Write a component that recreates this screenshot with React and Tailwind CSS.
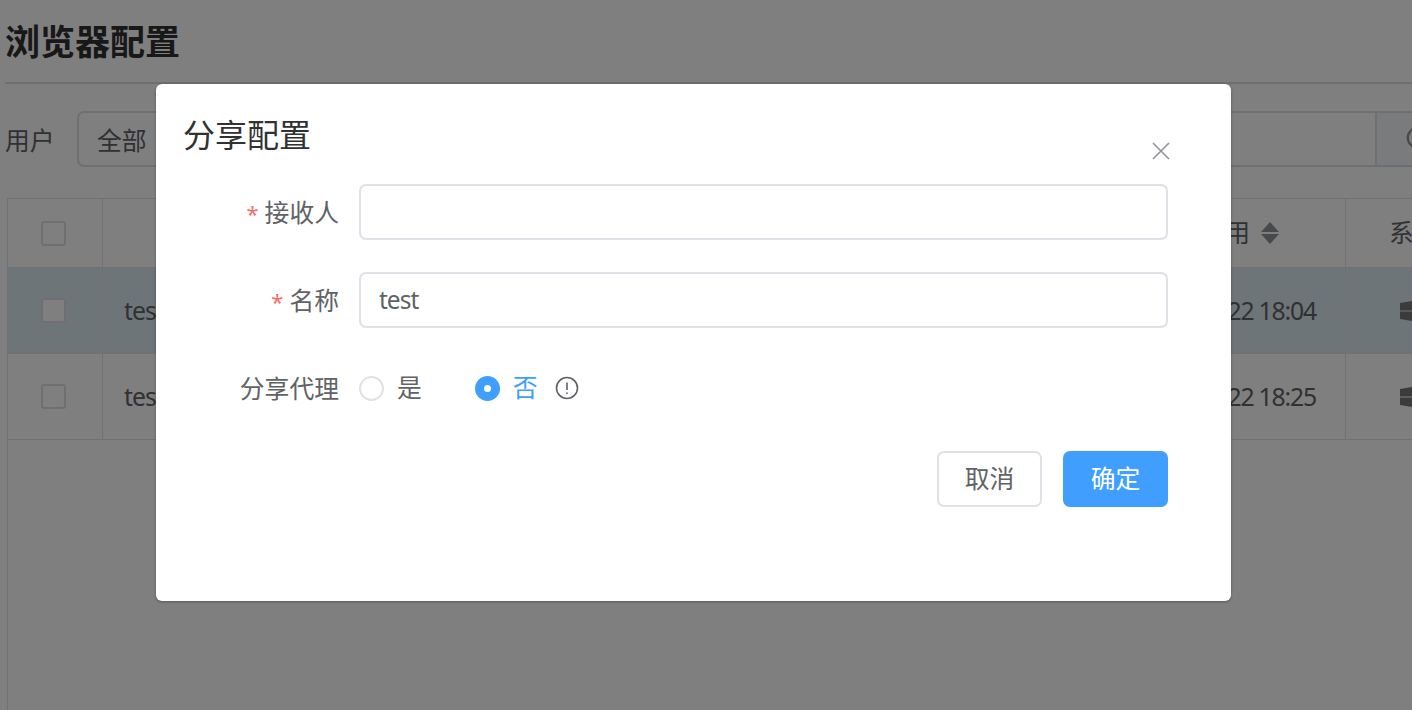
import { Search } from 'lucide-react';

const FONT = 'font-["Noto_Sans","Noto_Sans_CJK_SC",sans-serif]';

const ROWS = [
  { name: 'test', time: '2024-03-22 18:04', active: true },
  { name: 'test', time: '2024-03-22 18:25', active: false },
];

const Checkbox = () => (
  <span className="block w-[25px] h-[25px] rounded-[3px] border-2 border-[#dcdfe6] bg-white" />
);

const WindowsIcon = () => (
  <svg width="28" height="22" viewBox="0 0 28 22" className="block fill-[#777]">
    <path d="M0 3 L12 1 V10.4 H0 Z" />
    <path d="M13 1 L28 0 V10.4 H13 Z" />
    <path d="M0 11.6 H12 V21 L0 19 Z" />
    <path d="M13 11.6 H28 V22 L13 21 Z" />
  </svg>
);

const SortCaret = () => (
  <svg width="18" height="22" viewBox="0 0 18 22" className="block shrink-0 ml-[11px] fill-[#909399]">
    <path d="M9 0 L18 10 H0 Z" />
    <path d="M0 12 H18 L9 22 Z" />
  </svg>
);

const TableRow = ({ name, time, active }) => (
  <div className={`flex h-[86px] border-b border-[#dfe2e8] ${active ? 'bg-[#dcebf3]' : 'bg-white'}`}>
    <div className="w-[95px] shrink-0 flex items-center justify-center pr-1 border-r border-[#dfe2e8]">
      <Checkbox />
    </div>
    <div className="w-[500px] shrink-0 flex items-center pl-[21px] tracking-[-1px]">{name}</div>
    <div className="flex-1 flex items-center justify-end pr-[29px] border-r border-[#dfe2e8] tracking-[-1.2px]">{time}</div>
    <div className="w-[114px] shrink-0 flex items-center pl-[54px]">
      <WindowsIcon />
    </div>
  </div>
);

const Table = () => (
  <div className="mt-[31px] ml-[2px] border-l border-t border-[#dfe2e8] h-[600px] text-[24.8px] text-[#606266]">
    <div className="flex h-[69px] border-b border-[#dfe2e8]">
      <div className="w-[95px] shrink-0 flex items-center justify-center pr-1 border-r border-[#dfe2e8]">
        <Checkbox />
      </div>
      <div className="w-[500px] shrink-0" />
      <div className="flex-1 flex items-center justify-end pr-[66px] border-r border-[#dfe2e8]">
        最近使用
        <SortCaret />
      </div>
      <div className="w-[114px] shrink-0 flex items-center pl-[43px] whitespace-nowrap">系统</div>
    </div>
    {ROWS.map((r) => (
      <TableRow key={r.time} {...r} />
    ))}
  </div>
);

const Field = ({ label, required, children }) => (
  <div className="flex items-center h-14 mb-8">
    <label className="w-[175px] shrink-0 pr-5 pt-[2px] text-right text-[24.8px] text-[#606266] whitespace-nowrap">
      {required && <span className="text-[#f56c6c] text-[22px] mr-[6px]">*</span>}
      {label}
    </label>
    {children}
  </div>
);

const Dialog = () => (
  <div className="relative ml-[156px] mt-[84px] w-[1075px] h-[517px] bg-white rounded-[6px] shadow-[0_1px_3px_rgba(0,0,0,0.3)] pl-7 pr-[63px] pt-[30px]">
    <h2 className="text-[32px] leading-[42px] -ml-px text-[#303133]">分享配置</h2>
    <svg width="20" height="20" viewBox="0 0 20 20" className="absolute left-[995px] top-[57px] stroke-[#909399] stroke-[1.6]">
      <path d="M2 2 L18 18 M18 2 L2 18" />
    </svg>
    <div className="mt-7">
      <Field label="接收人" required>
        <div className="flex-1 h-14 rounded-[7px] border-2 border-[#e0e1e6]" />
      </Field>
      <Field label="名称" required>
        <div className="flex-1 h-14 rounded-[7px] border-2 border-[#e0e1e6] flex items-center px-[18px] text-[24.5px] tracking-[-1px] text-[#606266]">
          test
        </div>
      </Field>
      <Field label="分享代理">
        <div className="flex items-center text-[24.8px] text-[#606266]">
          <span className="w-[25px] h-[25px] rounded-full border-2 border-[#e0e1e6]" />
          <span className="ml-[13px]">是</span>
          <span className="ml-[53px] w-[25px] h-[25px] rounded-full bg-[#409eff] flex items-center justify-center">
            <span className="w-[7px] h-[7px] rounded-full bg-white" />
          </span>
          <span className="ml-[13px] text-[#409eff]">否</span>
          <svg width="24" height="24" viewBox="0 0 24 24" className="ml-[17px] fill-none stroke-[#606266] stroke-[1.6]">
            <circle cx="12" cy="12" r="10.5" />
            <path d="M12 6.5 V14 M12 16.5 V18" />
          </svg>
        </div>
      </Field>
    </div>
    <div className="flex justify-end gap-[21px] mt-[35px]">
      <button className="w-[105px] h-14 rounded-[7px] border-2 border-[#e0e1e6] bg-white text-[24.8px] text-[#606266]">取消</button>
      <button className="w-[105px] h-14 rounded-[7px] bg-[#409eff] text-[24.8px] text-white">确定</button>
    </div>
  </div>
);

export default function App() {
  return (
    <div className={`relative w-[1412px] h-[710px] overflow-hidden bg-white ${FONT}`}>
      <div className="pl-[5px] w-[1460px]">
        <h1 className="h-[84px] pt-[18px] border-b-2 border-[#dcdfe6] text-[35px] leading-[48px] font-bold text-[#303133]">
          浏览器配置
        </h1>
        <div className="flex items-center mt-[27px] h-14 text-[24.8px] text-[#606266]">
          <span className="w-[72px] pt-[3px]">用户</span>
          <div className="flex-1 h-14 rounded-[7px] border-2 border-[#dcdfe6] flex items-center pl-[18px]">
            <span className="pt-[3px]">全部</span>
            <span className="ml-auto h-full w-[83px] border-l-2 border-[#dcdfe6] bg-[#f5f7fa] flex items-center pl-[27px]">
              <Search size={30} strokeWidth={1.8} className="text-[#909399]" />
            </span>
          </div>
        </div>
        <Table />
      </div>
      <div className="absolute inset-0 bg-black/50">
        <Dialog />
      </div>
    </div>
  );
}
